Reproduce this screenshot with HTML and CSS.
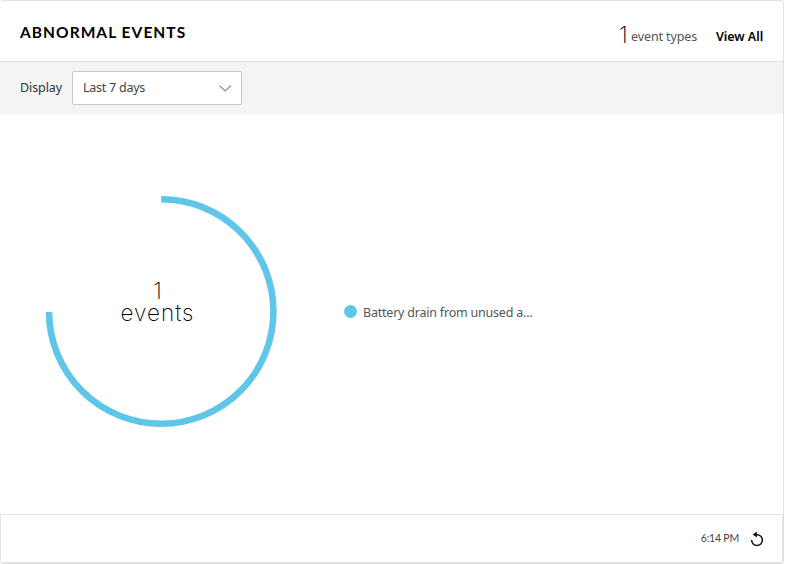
FILE: index.html
```html
<!DOCTYPE html>
<html lang="en">
<head>
<meta charset="utf-8">
<title>Abnormal Events</title>
<link rel="stylesheet" href="styles.css">
</head>
<body>
<section class="card">
  <header class="head">
    <h2 class="title">ABNORMAL EVENTS</h2>
    <div class="summary"><span class="count">1</span><span class="types">event types</span><a class="view">View All</a></div>
  </header>
  <div class="filter">
    <span class="label">Display</span>
    <div class="select"><span class="value">Last 7 days</span>
      <svg width="14" height="8" viewBox="0 0 14 8" fill="none" stroke="#777" stroke-width="1.1"><path d="M1.5 1.6l5.7 5.2 5.7-5.2"/></svg>
    </div>
  </div>
  <div class="content">
    <div class="chart">
      <svg class="ring" width="232" height="231" viewBox="0 0 232 231" fill="none" stroke="#60c6e8" stroke-width="6.6"><path d="M116.2 3.3A112.2 112.2 0 1 1 4 116"/></svg>
      <div class="center"><span class="num">1</span><span class="unit">events</span></div>
    </div>
    <div class="legend"><i class="dot"></i><span class="name">Battery drain from unused a...</span></div>
  </div>
  <footer class="foot">
    <span class="time">6:14 PM</span>
    <svg class="refresh" width="14" height="16" viewBox="0 0 14 16"><path d="M5.5 3.7H7A5.4 5.4 0 1 1 1.6 9.1" fill="none" stroke="#111" stroke-width="1.5"/><path d="M2.7 3.6L6.8.5v6.1z" fill="#111"/></svg>
  </footer>
</section>
</body>
</html>
```

FILE: styles.css
```css
* { box-sizing: border-box; }
body { margin: 0; background: #fff; font-family: "Noto Sans", sans-serif; font-size: 12.5px; color: #444; }
.card { width: 784px; height: 564px; border: 1px solid #e2e2e2; border-left: 0; border-bottom-width: 2px; border-radius: 4px; display: flex; flex-direction: column; overflow: hidden; white-space: nowrap; }
.head { height: 61px; border-bottom: 1px solid #e2e2e2; padding: 0 20px; display: flex; justify-content: space-between; }
.title { margin: 21px 0 0; font: 700 15.5px/20px Lato, sans-serif; letter-spacing: 1.05px; color: #000; }
.summary { display: flex; align-items: flex-start; }
.count { font: 200 23px/28px Inter, sans-serif; color: #000; width: 12px; margin-top: 20px; }
.types { color: #555; width: 85px; line-height: 20px; margin-top: 26px; letter-spacing: -0.1px; }
.view { color: #000; font-weight: 600; width: 47px; line-height: 20px; margin-top: 26px; letter-spacing: -0.05px; }
.filter { height: 52px; background: #f4f4f4; padding: 0 20px; display: flex; align-items: center; }
.label { width: 52px; color: #333; letter-spacing: -0.1px; padding-bottom: 2px; }
.value { letter-spacing: -0.25px; padding-bottom: 2px; }
.select { width: 170px; height: 34px; background: #fff; border: 1px solid #c8c8c8; border-radius: 2px; padding: 0 9px 0 10px; display: flex; align-items: center; justify-content: space-between; }
.content { height: 400px; display: flex; align-items: center; padding: 0 0 5px 45px; }
.chart { width: 232px; height: 231px; display: grid; }
.chart > * { grid-area: 1 / 1; }
.center { width: 225px; display: flex; flex-direction: column; align-items: center; justify-content: center; padding-bottom: 20px; font: 200 22.5px/22px Inter, sans-serif; color: #000; }
.unit { letter-spacing: 1px; }
.legend { margin-left: 66.5px; display: flex; align-items: center; gap: 6.5px; padding-top: 1px; }
.name { color: #555; letter-spacing: -0.21px; }
.dot { width: 13px; height: 13px; border-radius: 50%; background: #60c6e8; margin-top: -1px; }
.foot { height: 48px; width: 783px; border: 1px solid #e2e2e2; border-bottom: 0; padding: 0 18px; display: flex; align-items: center; justify-content: flex-end; gap: 11px; }
.time { font: 10.5px/16px Lato, sans-serif; letter-spacing: -0.2px; padding-bottom: 2px; }
.refresh { display: block; }
```
